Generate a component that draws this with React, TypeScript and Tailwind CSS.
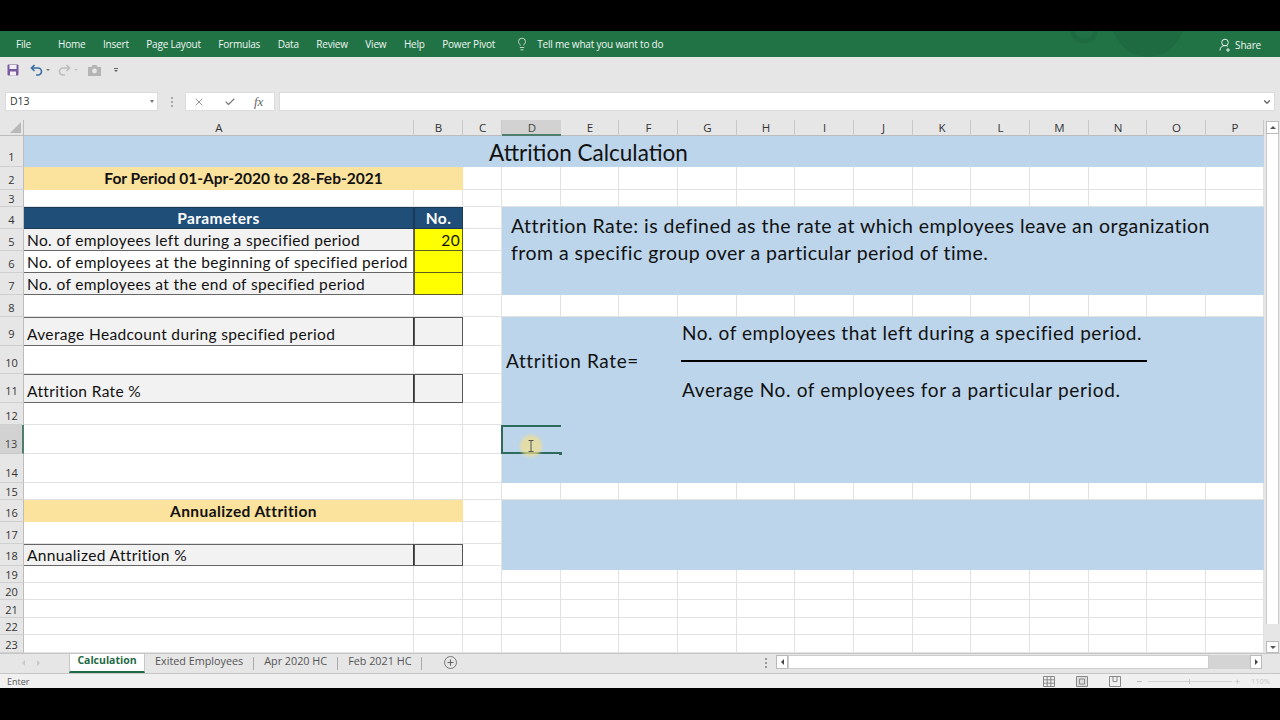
import React from "react";
import { X, Check, Lightbulb, Plus, ChevronDown } from "lucide-react";

const colNames = "ABCDEFGHIJKLMNOP".split("");
const rowNums = Array.from({ length: 23 }, (_, i) => i + 1);

const rowPad = (r: number) => {
  if (r === 3 || r === 15 || r >= 19) return "pb-[2px]";
  if (r === 9 || r === 11) return "pb-[6px]";
  if (r === 10) return "pb-[5px]";
  if ((r >= 4 && r <= 8) || r === 12 || r === 16 || r === 17) return "pb-[3px]";
  return "pb-[4px]";
};

const Inp = ({ children, className = "" }: { children?: React.ReactNode; className?: string }) => (
  <div className={"flex items-end overflow-hidden whitespace-nowrap text-[15.5px] leading-[20px] tracking-[0.35px] " + className}>{children}</div>
);

function Ribbon() {
  return (
    <div className="relative flex h-[26px] items-center overflow-hidden bg-[#217346] pl-[16px] font-['Open_Sans',sans-serif] text-[10px] tracking-[-0.2px] text-[#f0f6f2]">
      <span className="mr-[27px]">File</span>
      <div className="flex items-center gap-[17.5px]">
        <span>Home</span>
        <span>Insert</span>
        <span>Page Layout</span>
        <span>Formulas</span>
        <span>Data</span>
        <span>Review</span>
        <span>View</span>
        <span>Help</span>
        <span>Power Pivot</span>
      </div>
      <Lightbulb className="ml-[20px] mr-[8px] h-[14px] w-[14px]" strokeWidth={1.3} />
      <span>Tell me what you want to do</span>
      <svg className="absolute left-[1060px] top-0 h-[26px] w-[160px] opacity-30" viewBox="0 0 160 26" fill="none">
        <circle cx="24" cy="-2" r="12" stroke="#1a5c38" strokeWidth="5" />
        <circle cx="88" cy="-10" r="36" fill="#1a5c38" />
      </svg>
      <div className="absolute right-[19px] top-0 flex h-full items-center gap-[3px] pt-[2px]">
        <svg width="13" height="14" viewBox="0 0 13 14" fill="none" stroke="#e8f2ec" strokeWidth="1">
          <circle cx="6" cy="4.5" r="3.3" />
          <path d="M1 12.5c0-3 2-5 5-5 1 0 2 .3 2.7 .8M9 10v4M7 12h4" />
        </svg>
        <span>Share</span>
      </div>
    </div>
  );
}

function QuickAccess() {
  return (
    <div className="flex h-[28px] items-center bg-[#e6e6e6] pb-[2px] pl-[7px]">
      <svg width="12" height="12" viewBox="0 0 12 12">
        <rect x="0.5" y="0.5" width="11" height="11" rx="1" fill="#7a5a9e" />
        <rect x="2.5" y="1" width="7" height="4" fill="#f1eef5" />
        <rect x="3" y="7.5" width="6" height="4" fill="#f1eef5" />
      </svg>
      <svg className="ml-[11px]" width="13" height="12" viewBox="0 0 13 12" fill="none" stroke="#3a6ea5" strokeWidth="1.6">
        <path d="M4.5 1 1.5 4l3 3M2 4h6a3.5 3.5 0 0 1 0 7H6" />
      </svg>
      <span className="ml-[3px] h-0 w-0 border-x-[2px] border-t-[2px] border-x-transparent border-t-[#777]" />
      <svg className="ml-[8px]" width="13" height="12" viewBox="0 0 13 12" fill="none" stroke="#bdbdbd" strokeWidth="1.6">
        <path d="M8.5 1l3 3-3 3M11 4H5a3.5 3.5 0 0 0 0 7h2" />
      </svg>
      <span className="ml-[3px] h-0 w-0 border-x-[2px] border-t-[2px] border-x-transparent border-t-[#c4c4c4]" />
      <svg className="ml-[10px]" width="13" height="11" viewBox="0 0 13 11">
        <path d="M0 2h3.5l1-2h4l1 2H13v9H0z" fill="#b4b4b4" />
        <circle cx="6.5" cy="6" r="2.4" fill="#e6e6e6" />
      </svg>
      <div className="ml-[13px] flex flex-col items-center gap-[1px]">
        <span className="h-px w-[4px] bg-[#666]" />
        <span className="h-0 w-0 border-x-[2px] border-t-[2px] border-x-transparent border-t-[#666]" />
      </div>
    </div>
  );
}

function FormulaBar() {
  return (
    <div className="flex h-[35px] items-start bg-[#e6e6e6] pl-[5px] pt-[7px] font-['Open_Sans',sans-serif]">
      <div className="flex h-[19px] w-[153px] items-center justify-between border border-[#dcdcdc] bg-white pl-[4px] pr-[3px] text-[10.5px] text-[#333]">
        D13
        <span className="h-0 w-0 border-x-[2.5px] border-t-[3px] border-x-transparent border-t-[#777]" />
      </div>
      <div className="ml-[12px] flex h-[19px] w-[3px] flex-col items-center justify-center gap-[2px]">
        <span className="h-[2px] w-[2px] bg-[#aaa]" />
        <span className="h-[2px] w-[2px] bg-[#aaa]" />
        <span className="h-[2px] w-[2px] bg-[#aaa]" />
      </div>
      <div className="ml-[12px] flex h-[19px] w-[90px] items-center border border-[#dcdcdc] bg-white pl-[7px]">
        <X className="h-[12px] w-[12px] text-[#777]" strokeWidth={1.6} />
        <Check className="ml-[19px] h-[12px] w-[12px] text-[#777]" strokeWidth={2.2} />
        <span className="ml-[18px] font-['Liberation_Serif',serif] text-[13px] italic leading-none text-[#666]">fx</span>
      </div>
      <div className="ml-[4px] flex h-[19px] w-[996px] items-center justify-end border border-[#dcdcdc] bg-white pr-[2px]">
        <ChevronDown className="h-[10px] w-[10px] text-[#666]" strokeWidth={3} />
      </div>
    </div>
  );
}

function Sheet() {
  return (
    <div className="relative grid h-[533px] w-[1264px] grid-cols-[24px_390px_49px_39px_59px_58px_59px_59px_58px_59px_59px_58px_59px_59px_58px_59px_58px] grid-rows-[16px_31px_23px_17px_22px_22px_22px_22px_22px_29px_28px_29px_22px_29px_29px_17px_22px_22px_22px_17px_17px_18px_17px_18px] bg-white font-['Lato',sans-serif] text-[#111]">
      {/* corner */}
      <div className="relative border-b border-r border-[#bcbcbc] bg-[#e6e6e6]">
        <span className="absolute bottom-[2px] right-[2px] h-0 w-0 border-b-[11px] border-l-[11px] border-b-[#b9b9b9] border-l-transparent" />
      </div>
      {colNames.map((c, i) => (
        <div
          key={c}
          style={{ gridRow: 1, gridColumn: i + 2 }}
          className={
            c === "D"
              ? "flex items-center justify-center border-b-2 border-[#4f7f6c] bg-[#d2d2d2] pl-[1px] pt-[1px] font-['Open_Sans',sans-serif] text-[11.5px] text-[#444]"
              : "flex items-center justify-center border-b border-r border-b-[#bcbcbc] border-r-[#c8c8c8] bg-[#e6e6e6] pl-[1px] pt-[1px] font-['Open_Sans',sans-serif] text-[11.5px] text-[#333]"
          }
        >
          {c}
        </div>
      ))}
      {rowNums.map((r) => (
        <div
          key={r}
          style={{ gridRow: r + 1, gridColumn: 1 }}
          className={
            (r === 13
              ? "flex items-end justify-center border-b border-r-2 border-b-[#c8c8c8] border-r-[#4f7f6c] bg-[#d2d2d2] font-['Open_Sans',sans-serif] text-[11px] leading-none text-[#444] "
              : "flex items-end justify-center border-b border-r border-b-[#d0d0d0] border-r-[#bcbcbc] bg-[#e6e6e6] font-['Open_Sans',sans-serif] text-[11px] leading-none text-[#333] ") + rowPad(r)
          }
        >
          {r}
        </div>
      ))}
      {rowNums.flatMap((r) =>
        colNames.map((c, i) => (
          <div
            key={c + r}
            style={{ gridRow: r + 1, gridColumn: i + 2 }}
            className="border-b border-r border-[#e2e2e2]"
          />
        ))
      )}

      {/* Title */}
      <div className="col-start-2 col-span-16 row-start-2 flex items-center justify-center bg-[#bcd5eb] pr-[111px] pt-[3px] text-[22.5px]">
        Attrition Calculation
      </div>
      <div className="col-start-2 col-span-2 row-start-3 flex items-center justify-center bg-[#fbe29d] pt-[1px] text-[15.5px] font-bold">
        For Period 01-Apr-2020 to 28-Feb-2021
      </div>

      {/* Parameters table */}
      <div className="col-start-2 row-start-5 flex items-center justify-center border-y border-r border-[#1b3a57] bg-[#1f4e79] pt-[1px] text-[15.5px] font-bold tracking-[0.4px] text-white">
        Parameters
      </div>
      <div className="col-start-3 row-start-5 flex items-center justify-center border border-[#1b3a57] bg-[#1f4e79] pt-[1px] text-[15.5px] font-bold tracking-[0.4px] text-white">
        No.
      </div>
      <Inp className="col-start-2 row-start-6 border-b border-r border-[#666] bg-[#f2f2f2] pl-[3px]">No. of employees left during a specified period</Inp>
      <Inp className="col-start-3 row-start-6 justify-end border-x border-b border-[#5c5c20] bg-[#ffff00] pr-[2px]">20</Inp>
      <Inp className="col-start-2 row-start-7 border-b border-r border-[#666] bg-white pl-[3px]">No. of employees at the beginning of specified period</Inp>
      <Inp className="col-start-3 row-start-7 border-x border-b border-[#5c5c20] bg-[#ffff00]" />
      <Inp className="col-start-2 row-start-8 border-b border-r border-[#666] bg-[#f2f2f2] pl-[3px]">No. of employees at the end of specified period</Inp>
      <Inp className="col-start-3 row-start-8 border-x border-b border-[#5c5c20] bg-[#ffff00]" />

      {/* Rows 9, 11 */}
      <Inp className="col-start-2 row-start-10 border-y border-r border-y-[#666] border-r-[#333] bg-[#f2f2f2] pb-[1px] pl-[3px]">Average Headcount during specified period</Inp>
      <Inp className="col-start-3 row-start-10 border border-[#555] bg-[#f2f2f2]" />
      <Inp className="col-start-2 row-start-12 border-y border-r border-y-[#666] border-r-[#333] bg-[#f2f2f2] pb-[1px] pl-[3px]">Attrition Rate %</Inp>
      <Inp className="col-start-3 row-start-12 border border-[#555] bg-[#f2f2f2]" />

      {/* Annualized */}
      <div className="col-start-2 col-span-2 row-start-17 flex items-center justify-center bg-[#fbe29d] pt-[1px] text-[15.5px] font-bold tracking-[0.4px]">
        Annualized Attrition
      </div>
      <Inp className="col-start-2 row-start-19 border-y border-r border-y-[#666] border-r-[#333] bg-[#f2f2f2] pl-[3px]">Annualized Attrition %</Inp>
      <Inp className="col-start-3 row-start-19 border border-[#555] bg-[#f2f2f2]" />

      {/* Definition */}
      <div className="col-start-5 col-span-13 row-start-5 row-span-4 bg-[#bcd5eb] pl-[9px] pr-[40px] pt-[5px] text-[19.5px] leading-[27px] tracking-[0.46px]">
        Attrition Rate: is defined as the rate at which employees leave an organization from a specific group over a particular period of time.
      </div>

      {/* Formula block */}
      <div className="col-start-5 col-span-13 row-start-10 row-span-6 bg-[#bcd5eb]" />
      <div className="col-start-5 col-span-3 row-start-11 flex items-center whitespace-nowrap pl-[4px] pt-[3px] text-[19px] tracking-[0.6px]">
        Attrition Rate=
      </div>
      <div className="col-start-8 col-span-8 row-start-10 flex items-center whitespace-nowrap pl-[4px] pt-[3px] text-[19px] tracking-[0.55px]">
        No. of employees that left during a specified period.
      </div>
      <div className="col-start-8 col-span-8 row-start-11 flex items-center pl-[3px] pt-[2px]">
        <div className="h-[2px] w-full bg-black" />
      </div>
      <div className="col-start-8 col-span-8 row-start-12 flex items-center whitespace-nowrap pl-[4px] pt-[3px] text-[19px] tracking-[0.65px]">
        Average No. of employees for a particular period.
      </div>
      <div className="relative col-start-5 row-start-14 -ml-[1px] border-y-2 border-l-2 border-[#2f6b5c]">
        <span className="absolute -bottom-[3px] -right-[1px] h-[3px] w-[3px] bg-[#2f6b5c]" />
      </div>

      {/* Lower block */}
      <div className="col-start-5 col-span-13 row-start-17 row-span-3 -mb-[4px] bg-[#bcd5eb]" />

      {/* Cursor highlight */}
      <div className="absolute left-[520px] top-[315px] flex h-[22px] w-[22px] items-center justify-center rounded-full bg-[#f4e08c]/70 blur-[1.5px]" />
      <svg className="absolute left-[527px] top-[320px]" width="8" height="12" viewBox="0 0 8 12" fill="none" stroke="#555" strokeWidth="1">
        <path d="M1.5 .5h5M4 .5v11M1.5 11.5h5" />
      </svg>
    </div>
  );
}

function VScroll() {
  return (
    <div className="flex h-[533px] w-[16px] flex-col items-start bg-[#e6e6e6] pl-[2px] pt-[1px]">
      <div className="flex h-[13px] w-[13px] items-center justify-center border border-[#bbb] bg-white">
        <span className="h-0 w-0 border-x-[3px] border-b-[3px] border-x-transparent border-b-[#555]" />
      </div>
      <div className="h-[490px] w-[13px] border-x border-[#ccc] bg-white" />
      <div className="flex-1" />
      <div className="flex h-[12px] w-[13px] items-center justify-center border border-[#bbb] bg-white">
        <span className="h-0 w-0 border-x-[3px] border-t-[3px] border-x-transparent border-t-[#555]" />
      </div>
    </div>
  );
}

function TabsBar() {
  return (
    <div className="flex h-[21px] items-start border-y border-[#c6c6c6] bg-[#e6e6e6] font-['Open_Sans',sans-serif] text-[10.8px] text-[#555]">
      <div className="flex h-full w-[69px] items-center justify-center gap-[12px] pb-[1px] pr-[8px]">
        <span className="h-0 w-0 border-y-[3px] border-r-[3px] border-y-transparent border-r-[#c8c8c8]" />
        <span className="h-0 w-0 border-y-[3px] border-l-[3px] border-y-transparent border-l-[#c8c8c8]" />
      </div>
      <div className="flex h-[19px] w-[76px] items-center justify-center border-x border-b-2 border-x-[#c6c6c6] border-b-[#1f6b45] bg-white pb-[3px] text-[10.5px] font-bold text-[#1f6b45]">
        Calculation
      </div>
      <span className="ml-[10px] leading-[13px]">Exited Employees</span>
      <span className="ml-[10px] mt-[3px] h-[13px] w-px bg-[#aaa]" />
      <span className="ml-[10px] leading-[13px]">Apr 2020 HC</span>
      <span className="ml-[10px] mt-[3px] h-[13px] w-px bg-[#aaa]" />
      <span className="ml-[10px] leading-[13px]">Feb 2021 HC</span>
      <span className="ml-[10px] mt-[3px] h-[13px] w-px bg-[#aaa]" />
      <span className="ml-[22px] mt-[2px] flex h-[13px] w-[13px] items-center justify-center rounded-full border border-[#777]">
        <Plus className="h-[9px] w-[9px] text-[#666]" strokeWidth={3} />
      </span>
      <div className="ml-[307px] mt-[2px] flex h-[13px] w-[3px] flex-col items-center justify-center gap-[2px]">
        <span className="h-[2px] w-[2px] bg-[#999]" />
        <span className="h-[2px] w-[2px] bg-[#999]" />
        <span className="h-[2px] w-[2px] bg-[#999]" />
      </div>
      <div className="ml-[9px] mt-[1px] flex h-[14px] w-[486px] items-stretch">
        <div className="flex w-[12px] items-center justify-center border border-[#bbb] bg-white">
          <span className="h-0 w-0 border-y-[3px] border-r-[3px] border-y-transparent border-r-[#444]" />
        </div>
        <div className="w-[421px] border border-[#ccc] bg-white" />
        <div className="flex-1 bg-[#d4d4d4]" />
        <div className="flex w-[12px] items-center justify-center border border-[#bbb] bg-white">
          <span className="h-0 w-0 border-y-[3px] border-l-[3px] border-y-transparent border-l-[#444]" />
        </div>
      </div>
    </div>
  );
}

function StatusBar() {
  return (
    <div className="flex h-[14px] items-center bg-[#f0f0f0] pl-[7px] pr-[5px] pt-[1px] font-['Open_Sans',sans-serif] text-[9px] text-[#555]">
      <span>Enter</span>
      <div className="ml-auto flex items-center">
        <svg width="12" height="11" viewBox="0 0 12 11" fill="none" stroke="#888" strokeWidth="1">
          <path d="M.5.5h11v10H.5zM4.2.5v10M7.8.5v10M.5 3.8h11M.5 7.2h11" />
        </svg>
        <svg className="ml-[21px]" width="12" height="11" viewBox="0 0 12 11" fill="#ddd" stroke="#888" strokeWidth="1">
          <path d="M.5.5h11v10H.5z" />
          <path d="M3.5 3h5v5h-5z" />
        </svg>
        <svg className="ml-[21px]" width="12" height="11" viewBox="0 0 12 11" fill="none" stroke="#888" strokeWidth="1">
          <path d="M.5.5h11v10H.5zM4 .5v5h4v-5" />
        </svg>
        <span className="ml-[16px] h-px w-[5px] bg-[#bbb]" />
        <span className="relative ml-[6px] h-px w-[84px] bg-[#d4d4d4]">
          <span className="absolute left-[41px] top-[-2px] h-[5px] w-px bg-[#c4c4c4]" />
        </span>
        <span className="ml-[3px] text-[9px] leading-none text-[#bbb]">+</span>
        <span className="ml-[11px] w-[24px] text-[7.5px] text-[#c8c8c8]">110%</span>
      </div>
    </div>
  );
}

export default function App() {
  return (
    <div className="flex h-[720px] w-[1280px] flex-col overflow-hidden bg-black">
      <div className="h-[31px] shrink-0" />
      <Ribbon />
      <QuickAccess />
      <FormulaBar />
      <div className="flex">
        <Sheet />
        <VScroll />
      </div>
      <TabsBar />
      <StatusBar />
    </div>
  );
}
